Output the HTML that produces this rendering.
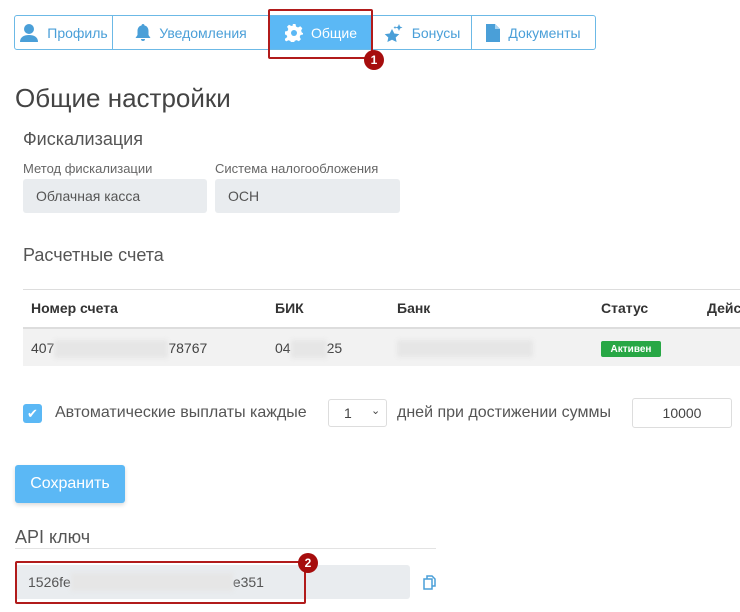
<!DOCTYPE html><html><head><meta charset="utf-8"><style>
body{margin:0;width:740px;height:612px;background:#fff;font-family:"Liberation Sans","DejaVu Sans",sans-serif;color:#444;position:relative;overflow:hidden}
.a{position:absolute}
.tabs{left:14px;top:15px;width:580px;height:33px;border:1px solid #6cb9e6;border-radius:3px;display:flex}
.tab{height:33px;display:flex;align-items:center;justify-content:center;color:#4a9fd8;font-size:14px;border-right:1px solid #6cb9e6;box-sizing:border-box}
.tab svg{margin-right:8px}
.inp{background:#e9ecef;border-radius:3px;font-size:14px;color:#555;display:flex;align-items:center;padding-left:13px;box-sizing:border-box}
.th{font-weight:bold;font-size:14px;color:#333}
.blur{background:#e6e6e6;filter:blur(2px)}
.badge{width:20px;height:20px;border-radius:50%;background:#a60d0d;color:#fff;font-size:12px;font-weight:bold;display:flex;align-items:center;justify-content:center}
</style></head><body>
<div class="a tabs">
<div class="tab" style="width:98px"><svg width="20" height="18" viewBox="0 0 20 18"><circle cx="10" cy="5" r="5" fill="#4a9fd8"/><path d="M1 18c0-5 4-7 9-7s9 2 9 7z" fill="#4a9fd8"/></svg>Профиль</div>
<div class="tab" style="width:157px"><svg width="16" height="18" viewBox="0 0 16 18"><path d="M8 0c1 0 1.5.7 1.5 1.5C12 2 13.5 4 13.5 7v4l2 3H.5l2-3V7c0-3 1.5-5 4-5.5C6.5.7 7 0 8 0zM6 15h4a2 2 0 0 1-4 0z" fill="#4a9fd8"/></svg>Уведомления</div>
<div class="tab" style="width:103px;background:#5bb8f5;color:#fff"><svg width="18" height="18" viewBox="0 0 18 18"><path d="M7.5 0h3l.5 2.5 2 1 2.3-1.2 2 2-1.2 2.3.8 2L18 9v1.5l-2.5.5-.8 2 1.2 2.3-2 2-2.3-1.2-2 .8-.6 2.6h-3l-.5-2.5-2-.8-2.3 1.2-2-2L2.3 13l-.8-2L0 10.5v-3l2.5-.5.8-2L2 2.8l2-2 2.3 1.2 2-.8z" fill="#fff"/><circle cx="9" cy="9" r="3" fill="#5bb8f5"/></svg>Общие</div>
<div class="tab" style="width:99px"><svg width="20" height="18" viewBox="0 0 20 18"><path d="M8 5l2.3 4.5 5 .6-3.6 3.4.9 4.5L8 15.8 3.4 18l.9-4.5L.7 10.1l5-.6z" fill="#4a9fd8"/><path d="M15 0l1 2.5 2.5 1-2.5 1-1 2.5-1-2.5-2.5-1 2.5-1zM11 2l.5 1 1 .5-1 .5-.5 1-.5-1-1-.5 1-.5z" fill="#4a9fd8"/></svg>Бонусы</div>
<div class="tab" style="width:123px;border-right:0"><svg width="14" height="18" viewBox="0 0 14 18"><path d="M0 0h9l5 5v13H0z" fill="#4a9fd8"/><path d="M9 0v5h5" fill="#a8d4f2"/></svg>Документы</div>
</div>
<div class="a" style="left:268px;top:9px;width:101px;height:46px;border:2px solid #b11b1b;border-radius:2px"></div>
<div class="a badge" style="left:364px;top:50px">1</div>
<div class="a" style="left:15px;top:83px;font-size:26px;color:#444">Общие настройки</div>
<div class="a" style="left:23px;top:129px;font-size:18px;color:#555">Фискализация</div>
<div class="a" style="left:23px;top:161px;font-size:13px;color:#666">Метод фискализации</div>
<div class="a" style="left:215px;top:161px;font-size:13px;color:#666">Система налогообложения</div>
<div class="a inp" style="left:23px;top:179px;width:184px;height:34px">Облачная касса</div>
<div class="a inp" style="left:215px;top:179px;width:185px;height:34px">ОСН</div>
<div class="a" style="left:23px;top:245px;font-size:18px;color:#555">Расчетные счета</div>
<div class="a" style="left:23px;top:289px;width:717px;height:1px;background:#ddd"></div>
<div class="a" style="left:23px;top:327px;width:717px;height:2px;background:#ddd"></div>
<div class="a" style="left:23px;top:329px;width:717px;height:37px;background:#f2f2f2"></div>
<div class="a th" style="left:31px;top:300px">Номер счета</div>
<div class="a th" style="left:275px;top:300px">БИК</div>
<div class="a th" style="left:397px;top:300px">Банк</div>
<div class="a th" style="left:601px;top:300px">Статус</div>
<div class="a th" style="left:707px;top:300px">Дейс</div>
<div class="a" style="left:31px;top:340px;font-size:14px">407<span style="display:inline-block;width:114px;height:18px;vertical-align:middle" class="blur"></span>78767</div>
<div class="a" style="left:275px;top:340px;font-size:14px">04<span style="display:inline-block;width:36px;height:18px;vertical-align:middle" class="blur"></span>25</div>
<div class="a blur" style="left:397px;top:340px;width:136px;height:17px"></div>
<div class="a" style="left:601px;top:341px;width:60px;height:16px;background:#28a745;color:#fff;font-size:10px;font-weight:bold;border-radius:2px;display:flex;align-items:center;justify-content:center">Активен</div>
<div class="a" style="left:23px;top:404px;width:19px;height:19px;background:#5bb8f5;border-radius:3px;color:#fff;font-size:13px;text-align:center;line-height:19px">✔</div>
<div class="a" style="left:55px;top:404px;font-size:16px;color:#555">Автоматические выплаты каждые</div>
<div class="a" style="left:328px;top:399px;width:59px;height:28px;border:1px solid #ddd;border-radius:3px;box-sizing:border-box;font-size:14px;padding:5px 0 0 15px">1<span style="position:absolute;left:42px;top:4px;font-size:11px">⌄</span></div>
<div class="a" style="left:397px;top:404px;font-size:16px;color:#555">дней при достижении суммы</div>
<div class="a" style="left:632px;top:398px;width:100px;height:30px;border:1px solid #ddd;border-radius:3px;box-sizing:border-box;font-size:14px;text-align:center;line-height:28px">10000</div>
<div class="a" style="left:15px;top:465px;width:110px;height:38px;background:#5bb8f5;border-radius:3px;color:#fff;font-size:16px;text-align:center;line-height:38px;box-shadow:0 2px 4px rgba(0,0,0,.15)">Сохранить</div>
<div class="a" style="left:15px;top:527px;font-size:18px;color:#555">API ключ</div>
<div class="a" style="left:15px;top:548px;width:421px;height:1px;background:#e3e3e3"></div>
<div class="a inp" style="left:15px;top:565px;width:395px;height:34px">1526fe<span style="display:inline-block;width:162px;height:18px" class="blur"></span>e351</div>
<div class="a" style="left:15px;top:561px;width:287px;height:39px;border:2px solid #b11b1b;border-radius:2px"></div>
<div class="a badge" style="left:298px;top:553px">2</div>
<svg class="a" style="left:423px;top:575px" width="13" height="15" viewBox="0 0 13 15"><rect x="1" y="4" width="8" height="10" fill="none" stroke="#4a9fd8" stroke-width="1.5"/><path d="M4 4V1h5l3 3v7H9" fill="none" stroke="#4a9fd8" stroke-width="1.5"/></svg>
</body></html>
